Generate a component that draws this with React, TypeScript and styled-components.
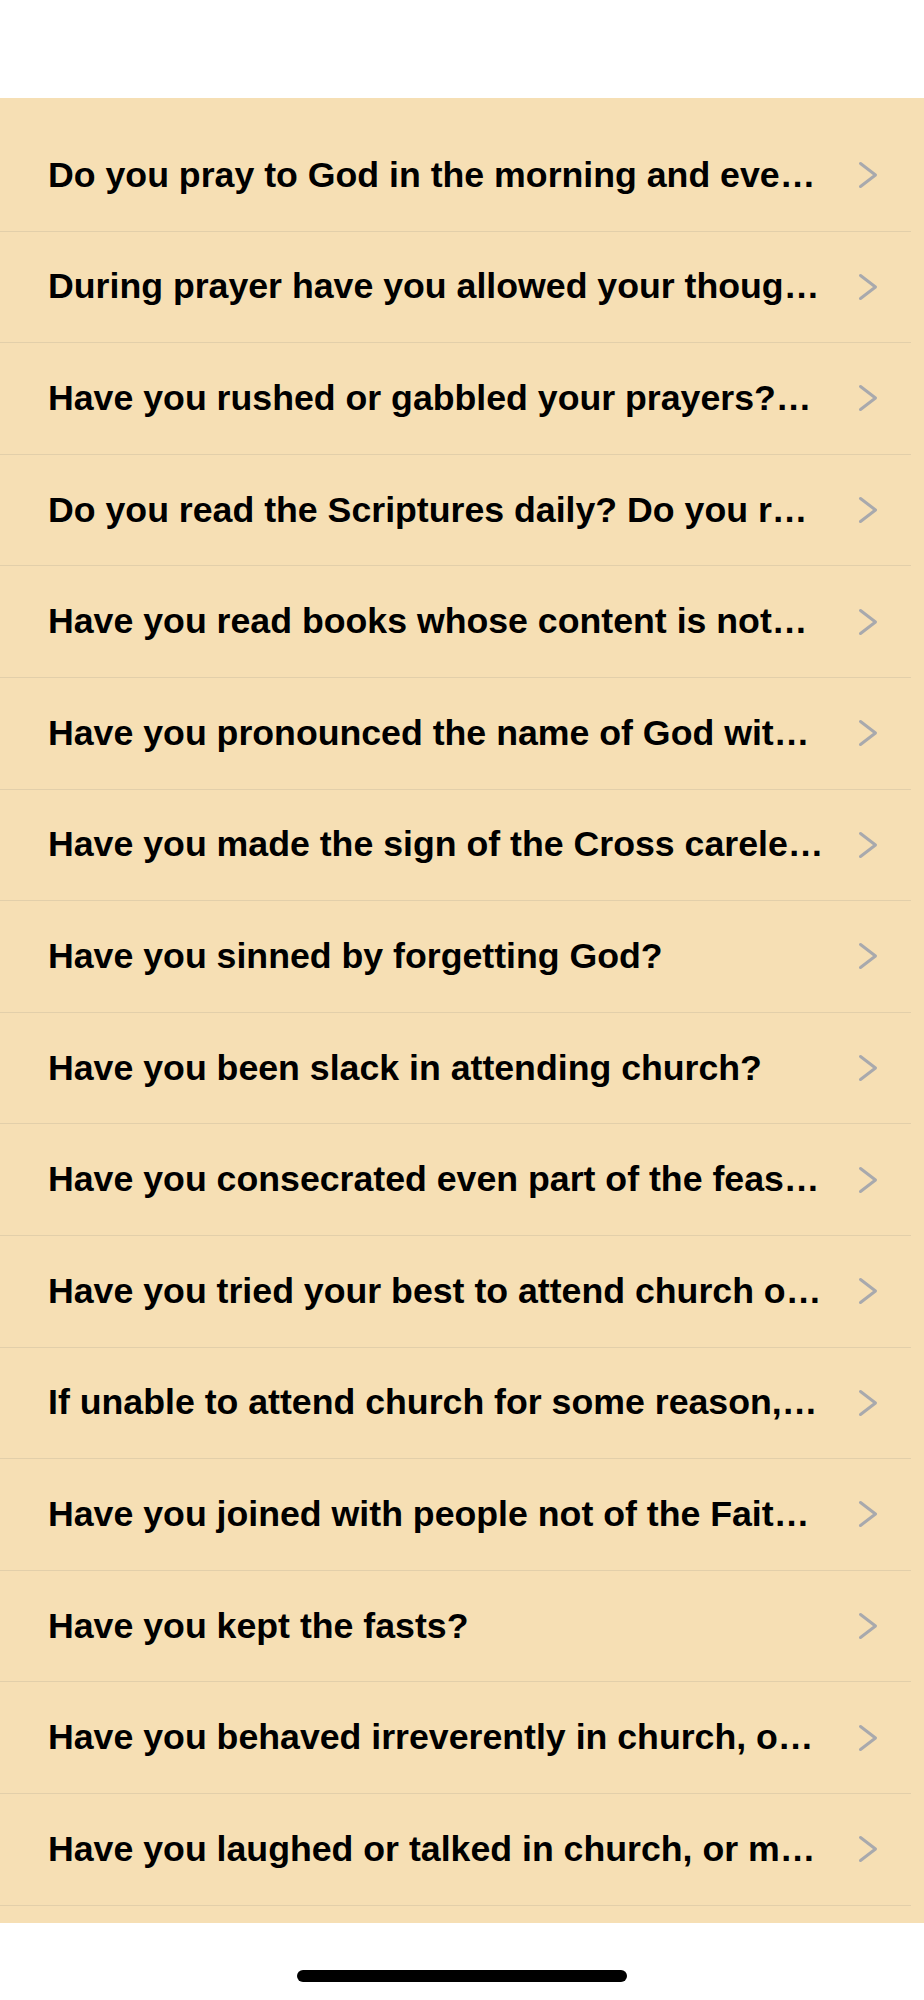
import React, { ReactElement } from 'react';
import styled, { createGlobalStyle } from 'styled-components';

const GlobalStyle = createGlobalStyle`
  html, body {
    margin: 0;
    padding: 0;
    background: #ffffff;
    font-family: "Liberation Sans", Arial, Helvetica, sans-serif;
  }
  * {
    box-sizing: border-box;
  }
`;

const Screen = styled.div`
  width: 924px;
  height: 2000px;
  display: flex;
  flex-direction: column;
  background: #ffffff;
  overflow: hidden;
`;

const TopBar = styled.div`
  height: 98px;
  flex-shrink: 0;
  background: #ffffff;
`;

const List = styled.div`
  height: 1825px;
  flex-shrink: 0;
  padding-top: 22px;
  background: #f6dfb4;
  overflow: hidden;
`;

const Row = styled.div`
  height: 111.6px;
  display: flex;
  align-items: center;
  padding: 0 33px 0 48px;
  margin-right: 13px;
  border-bottom: 1px solid #e2cfaa;
`;

const RowText = styled.span`
  flex: 1;
  min-width: 0;
  font-size: 35.7px;
  font-weight: 700;
  color: #000000;
  white-space: nowrap;
  overflow: hidden;
  text-overflow: ellipsis;
  padding-right: 16px;
`;

const Chevron = styled.svg`
  width: 20px;
  height: 28px;
  flex-shrink: 0;
`;

const BottomArea = styled.div`
  flex: 1;
  display: flex;
  justify-content: center;
  align-items: flex-end;
  padding-bottom: 18px;
  background: #ffffff;
`;

const HomeIndicator = styled.div`
  width: 330px;
  height: 12px;
  border-radius: 6px;
  background: #000000;
`;

const questions: string[] = [
  'Do you pray to God in the morning and eve…',
  'During prayer have you allowed your thoug…',
  'Have you rushed or gabbled your prayers?…',
  'Do you read the Scriptures daily? Do you r…',
  'Have you read books whose content is not…',
  'Have you pronounced the name of God wit…',
  'Have you made the sign of the Cross carele…',
  'Have you sinned by forgetting God?',
  'Have you been slack in attending church?',
  'Have you consecrated even part of the feas…',
  'Have you tried your best to attend church o…',
  'If unable to attend church for some reason,…',
  'Have you joined with people not of the Fait…',
  'Have you kept the fasts?',
  'Have you behaved irreverently in church, o…',
  'Have you laughed or talked in church, or m…',
];

function App(): ReactElement {
  return (
    <Screen>
      <GlobalStyle />
      <TopBar />
      <List>
        {questions.map((q) => (
          <Row key={q}>
            <RowText>{q}</RowText>
            <Chevron viewBox="0 0 20 28">
              <polyline
                points="2.5,2.5 17.5,14 2.5,25.5"
                fill="none"
                stroke="#a8a9ad"
                strokeWidth="3"
                strokeLinecap="round"
                strokeLinejoin="round"
              />
            </Chevron>
          </Row>
        ))}
      </List>
      <BottomArea>
        <HomeIndicator />
      </BottomArea>
    </Screen>
  );
}

export default App;
